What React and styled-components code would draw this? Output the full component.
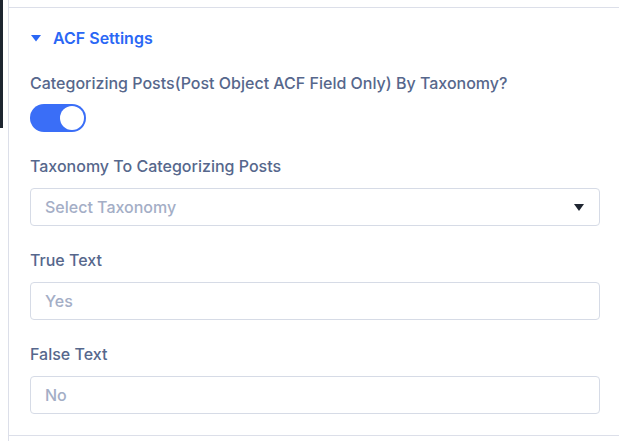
import React from "react";
import styled, { createGlobalStyle } from "styled-components";

const Global = createGlobalStyle`
  html, body { margin: 0; padding: 0; background: #ffffff; }
  body { font-family: Inter, "Noto Sans", sans-serif; }
  * { box-sizing: border-box; }
`;

const Page = styled.div`
  display: flex;
  height: 441px;
  overflow: hidden;
`;

const Rail = styled.div`
  width: 8px;
  flex: none;
  display: flex;
  flex-direction: column;
`;

const RailBar = styled.div`
  width: 3px;
  height: 128px;
  background: #1e2630;
`;

const Panel = styled.div`
  flex: 1;
  border-left: 1px solid #dcdfe9;
  display: flex;
  flex-direction: column;
`;

const PrevSection = styled.div`
  height: 8px;
  border-bottom: 1px solid #dcdfe9;
`;

const Section = styled.section`
  padding: 19px 19px 0 21px;
  height: 428px;
  border-bottom: 1px solid #dcdfe9;
  display: flex;
  flex-direction: column;
`;

const Header = styled.div`
  display: flex;
  align-items: center;
  gap: 12px;
  height: 22px;
  color: #2a67f5;
  font-size: 16px;
  font-weight: 600;
  line-height: 22px;
  margin-bottom: 24px;
`;

const Caret = styled.svg`
  width: 10px;
  height: 7px;
  flex: none;
  margin-left: 1px;
`;

const Field = styled.div`
  display: flex;
  flex-direction: column;
  margin-bottom: ${(p) => p.$mb ?? 24}px;
`;

const Label = styled.label`
  color: #56678c;
  font-size: 16px;
  font-weight: 500;
  line-height: 20px;
  margin-bottom: ${(p) => p.$mb ?? 12}px;
`;

const Toggle = styled.div`
  width: 56px;
  height: 28px;
  border-radius: 14px;
  background: #3a6ef7;
  padding: 2px;
  display: flex;
  justify-content: flex-end;
`;

const Knob = styled.div`
  width: 24px;
  height: 24px;
  border-radius: 50%;
  background: #ffffff;
`;

const Box = styled.div`
  height: 38px;
  border: 1px solid #d6dbe6;
  border-radius: 4px;
  display: flex;
  align-items: center;
  justify-content: space-between;
  padding: 0 15px 0 14px;
  font-size: 16px;
  color: #a4aec6;
  font-weight: 500;
`;

const Arrow = styled.svg`
  width: 10px;
  height: 7px;
`;

export default function App() {
  return (
    <>
      <Global />
      <Page>
        <Rail>
          <RailBar />
        </Rail>
        <Panel>
          <PrevSection />
          <Section>
            <Header>
              <Caret viewBox="0 0 10 7">
                <path d="M0 0 L10 0 L5 6.5 Z" fill="#2a67f5" />
              </Caret>
              ACF Settings
            </Header>
            <Field $mb={24}>
              <Label $mb={11}>Categorizing Posts(Post Object ACF Field Only) By Taxonomy?</Label>
              <Toggle>
                <Knob />
              </Toggle>
            </Field>
            <Field>
              <Label>Taxonomy To Categorizing Posts</Label>
              <Box>
                Select Taxonomy
                <Arrow viewBox="0 0 10 7">
                  <path d="M0 0 L10 0 L5 7 Z" fill="#1f2631" />
                </Arrow>
              </Box>
            </Field>
            <Field>
              <Label>True Text</Label>
              <Box>Yes</Box>
            </Field>
            <Field>
              <Label>False Text</Label>
              <Box>No</Box>
            </Field>
          </Section>
        </Panel>
      </Page>
    </>
  );
}
